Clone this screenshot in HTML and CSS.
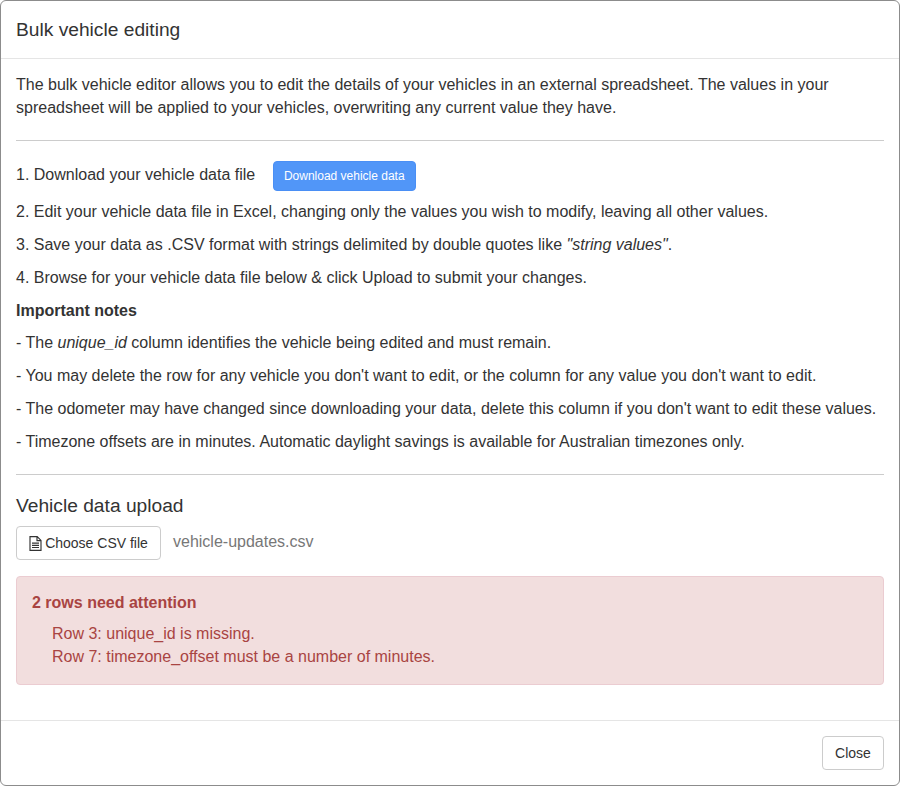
FILE: index.html
```html
<!DOCTYPE html>
<html lang="en">
<head>
<meta charset="utf-8">
<title>Bulk vehicle editing</title>
<link rel="stylesheet" href="styles.css">
</head>
<body>
<div class="modal">
  <header class="modal-header"><h4 class="modal-title">Bulk vehicle editing</h4></header>
  <main class="modal-body">
    <p>The bulk vehicle editor allows you to edit the details of your vehicles in an external spreadsheet. The values in your spreadsheet will be applied to your vehicles, overwriting any current value they have.</p>
    <hr>
    <p class="download-row"><span class="download-label">1. Download your vehicle data file</span> <button class="btn btn-primary" type="button">Download vehicle data</button></p>
    <p>2. Edit your vehicle data file in Excel, changing only the values you wish to modify, leaving all other values.</p>
    <p>3. Save your data as .CSV format with strings delimited by double quotes like <em>"string values"</em>.</p>
    <p>4. Browse for your vehicle data file below &amp; click Upload to submit your changes.</p>
    <p><strong>Important notes</strong></p>
    <p>- The <em>unique_id</em> column identifies the vehicle being edited and must remain.</p>
    <p>- You may delete the row for any vehicle you don't want to edit, or the column for any value you don't want to edit.</p>
    <p>- The odometer may have changed since downloading your data, delete this column if you don't want to edit these values.</p>
    <p>- Timezone offsets are in minutes. Automatic daylight savings is available for Australian timezones only.</p>
    <hr>
    <h4 class="section-title">Vehicle data upload</h4>
    <div class="upload-row">
      <button class="btn btn-default" type="button">
        <svg class="file-icon" viewBox="0 0 13 15" width="13" height="15" aria-hidden="true"><path d="M1 .6h7.2l3.8 3.8v10h-11z M8 .6v4h4 M3 7.1h7 M3 9.3h7 M3 11.5h7" fill="none" stroke="#333" stroke-width="1.15"/></svg>
        Choose CSV file
      </button>
      <span class="file-name">vehicle-updates.csv</span>
    </div>
    <div class="alert">
      <strong class="alert-title">2 rows need attention</strong>
      <ul class="alert-list">
        <li>Row 3: unique_id is missing.</li>
        <li>Row 7: timezone_offset must be a number of minutes.</li>
      </ul>
    </div>
  </main>
  <footer class="modal-footer"><button class="btn btn-default btn-close" type="button">Close</button></footer>
</div>
</body>
</html>
```
FILE: styles.css
```css
* { box-sizing: border-box; }
html, body { margin: 0; padding: 0; background: #fff; }
body {
  font-family: "Liberation Sans", Arial, sans-serif;
  font-size: 16px;
  line-height: 1.42857;
  color: #333;
}
.modal {
  width: 900px;
  height: 786px;
  display: flex;
  flex-direction: column;
  background: #fff;
  border: 1px solid #8c8c8c;
  border-radius: 6px;
}
.modal-header {
  padding: 15px;
  border-bottom: 1px solid #e5e5e5;
}
.modal-title { margin: 0; font-size: 19.2px; font-weight: 400; line-height: 1.42857; }
.modal-body { flex: 1; padding: 15px 15px 0; }
p { margin: 0 0 10px; }
hr { margin: 20px 0; border: 0; border-top: 1px solid #ccc; height: 1px; }
.download-row { height: 30px; display: flex; align-items: flex-start; }
.download-label { margin-top: 2.5px; }
.btn {
  font-family: inherit;
  border: 1px solid transparent;
  border-radius: 4px;
  cursor: pointer;
}
.btn-primary {
  margin-left: 18px;
  flex: none;
  width: 143px;
  height: 30px;
  padding: 0 1px 0 0;
  font-size: 12px;
  line-height: 18px;
  color: #fff;
  background: #5196f8;
  border-color: #4a8ff5;
}
.btn-default { background: #fff; border-color: #ccc; color: #333; }
.section-title { margin: 20px 0 10px; font-size: 19.2px; font-weight: 400; line-height: 1.1; }
.upload-row { display: flex; align-items: flex-start; gap: 12px; }
.upload-row .btn-default {
  width: 145px;
  height: 34px;
  padding: 1px 0 0;
  font-size: 14px;
  display: flex;
  align-items: center;
  justify-content: center;
  gap: 3px;
}
.file-icon { flex: none; }
.file-name { color: #777; padding-top: 5px; }
.alert {
  margin-top: 16px;
  height: 109px;
  padding: 15px;
  color: #a94442;
  background: #f2dede;
  border: 1px solid #ebccd1;
  border-radius: 4px;
}
.alert-title { display: block; margin-bottom: 8.5px; }
.alert-list { margin: 0; padding: 0 0 0 20px; list-style: none; }
.modal-footer {
  height: 65px;
  padding: 15px;
  display: flex;
  justify-content: flex-end;
  border-top: 1px solid #e5e5e5;
}
.btn-close { width: 62px; height: 34px; padding: 0; font-size: 14px; }
```
